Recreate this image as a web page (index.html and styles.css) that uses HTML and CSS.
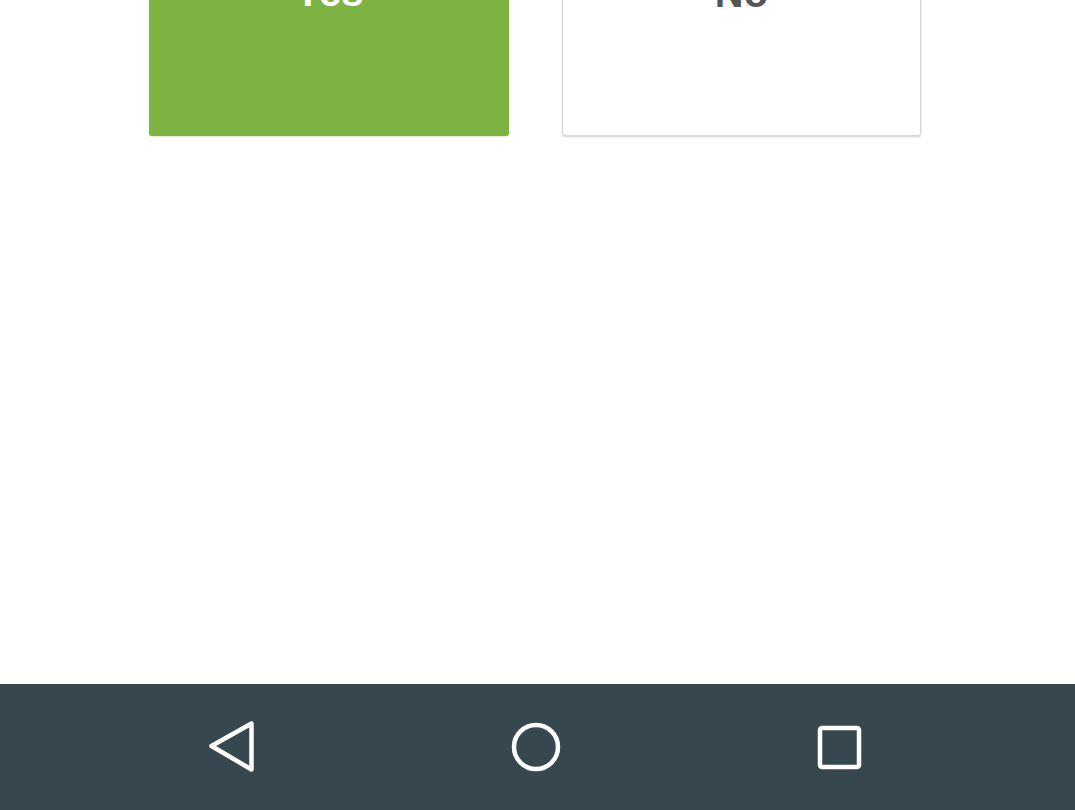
FILE: index.html
```html
<!DOCTYPE html>
<html>
<head>
<meta charset="utf-8">
<link rel="stylesheet" href="styles.css">
</head>
<body>
<div class="screen">
  <main class="content">
    <div class="choices">
      <div class="choice choice-yes">Yes</div>
      <div class="choice choice-no">No</div>
    </div>
  </main>
  <nav class="navbar">
    <span class="nav-btn">
      <svg width="50" height="54" viewBox="0 0 50 54">
        <path d="M3.5 26 L43.5 3.5 L43.5 49.5 Z" fill="none" stroke="#ffffff" stroke-width="4.5" stroke-linejoin="round"/>
      </svg>
    </span>
    <span class="nav-btn">
      <svg width="50" height="54" viewBox="0 0 50 54">
        <circle cx="25" cy="27" r="22" fill="none" stroke="#ffffff" stroke-width="4.5"/>
      </svg>
    </span>
    <span class="nav-btn">
      <svg width="50" height="54" viewBox="0 0 50 54">
        <rect x="6" y="8" width="39" height="39" rx="2" fill="none" stroke="#ffffff" stroke-width="4.5"/>
      </svg>
    </span>
  </nav>
</div>
</body>
</html>
```
FILE: styles.css
```css
html, body {
  margin: 0;
  padding: 0;
  background: #ffffff;
}
.screen {
  width: 1075px;
  height: 810px;
  display: flex;
  flex-direction: column;
  overflow: hidden;
  font-family: "Liberation Sans", Arial, sans-serif;
}
.content {
  flex: 1;
  background: #ffffff;
}
.choices {
  display: flex;
  gap: 53px;
  padding-left: 149px;
  margin-top: -84px;
}
.choice {
  height: 220px;
  border-radius: 3px;
  font-weight: bold;
  font-size: 40px;
  line-height: 40px;
  padding-top: 56px;
  text-align: center;
  box-sizing: border-box;
}
.choice-yes {
  width: 360px;
  background: #7cb342;
  color: #ffffff;
  box-shadow: 0 1px 2px rgba(0,0,0,0.12);
}
.choice-no {
  width: 359px;
  background: #ffffff;
  color: #555555;
  border: 1px solid #d6d6d6;
  box-shadow: 0 1px 2px rgba(0,0,0,0.18);
}
.navbar {
  height: 126px;
  background: #37474f;
  display: flex;
  align-items: center;
  justify-content: center;
  gap: 253px;
  padding-right: 4px;
  box-sizing: border-box;
}
.nav-btn {
  width: 50px;
  height: 54px;
  display: block;
}
.nav-btn svg {
  display: block;
}
```
